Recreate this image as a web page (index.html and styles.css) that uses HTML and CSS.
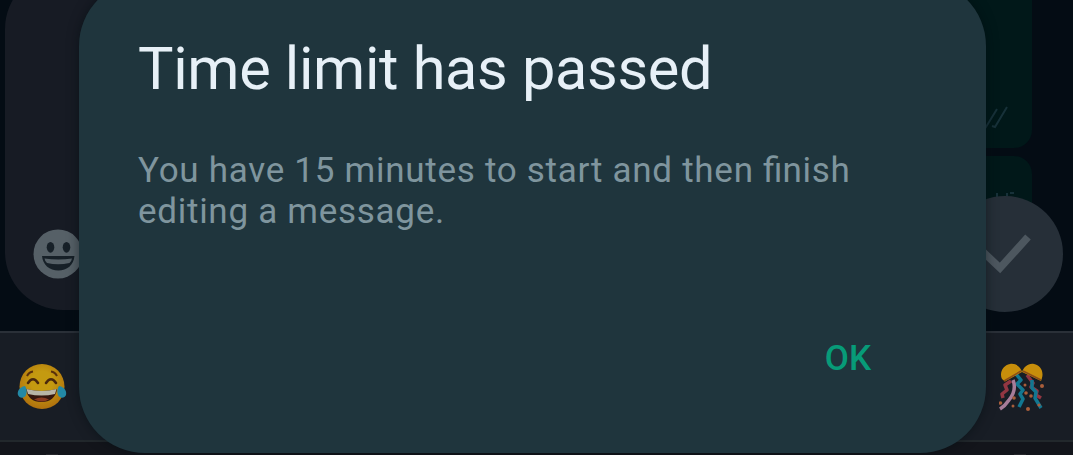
FILE: index.html
```html
<!DOCTYPE html>
<html lang="en">
<head>
    <meta charset="UTF-8">
    <meta name="viewport" content="width=device-width, initial-scale=1.0">
    <title>Edit message</title>
    <link rel="stylesheet" href="styles.css">
</head>
<body>
    <!-- Dimmed conversation behind the dialog -->
    <div class="screen">
        <div class="chat">
            <div class="messages">
                <div class="bubble">
                    <svg class="ticks" width="28" height="26" viewBox="0 0 28 26">
                        <path d="M1 20l3 3L15 5M10 22l3 1L25 3"/>
                    </svg>
                </div>
                <div class="bubble bubble-next">
                    <svg width="28" height="8" viewBox="0 0 28 8">
                        <path d="M8 2v5M18 2v5M21 2h4"/>
                    </svg>
                </div>
            </div>
            <div class="composer">
                <div class="input">
                    <svg width="50" height="50" viewBox="0 0 50 50">
                        <circle cx="25" cy="25" r="24.5" fill="#566067"/>
                        <ellipse cx="17.500" cy="18.3" rx="3.8" ry="5.4" fill="#172028"/>
                        <ellipse cx="33.500" cy="18.3" rx="3.8" ry="5.4" fill="#172028"/>
                        <path d="M9 27h32.500c-.8 9-7.500 14.500-16.200 14.500S9.800 36 9 27z" fill="#172028"/>
                        <path d="M11.500 29.500q14 2 27.500 0-.5 3-2.500 4.500-11.500 2.500-22.500 0-2-1.500-2.500-4.500z" fill="#566067"/>
                    </svg>
                </div>
                <div class="send">
                    <svg width="58" height="46" viewBox="0 0 58 46">
                        <path d="M5 19l19 18L52 6" fill="none" stroke="#4d575f" stroke-width="7.500"/>
                    </svg>
                </div>
            </div>
        </div>

        <div class="emoji-bar">
            <!-- Tears of joy -->
            <svg width="50" height="48" viewBox="0 0 50 48">
                <defs>
                    <radialGradient id="face" cx=".5" cy=".4" r=".6">
                        <stop offset=".4" stop-color="#c49a10"/>
                        <stop offset="1" stop-color="#af700e"/>
                    </radialGradient>
                </defs>
                <circle cx="25" cy="23.500" r="22.500" fill="url(#face)"/>
                <path d="M10 13q2-4 6-4.500M34 8.500q4 .5 6 4.500" fill="none" stroke="#59300c" stroke-width="2"/>
                <path d="M11 20q5-7.500 10 0M29 20q5-7.500 10 0" fill="none" stroke="#49280d" stroke-width="2.600" stroke-linecap="round"/>
                <path d="M9 26q16 4 31 0c-1 8.500-7 13-15.500 13S10 34.500 9 26z" fill="#35170e"/>
                <path d="M9.500 26q15.500 4 30 0l-1.500 5q-13.500 3-27 0z" fill="#b8b5a6"/>
                <path d="M17 36.500q7.500-4 15 0-7 4-15 0z" fill="#8a3b22"/>
                <path d="M8 23c-6 1-8 6-7 9s6 4 8 0c1-3 1-6-1-9zM42 23c6 1 8 6 7 9s-6 4-8 0c-1-3-1-6 1-9z" fill="#2389a5"/>
            </svg>
            <!-- Confetti -->
            <svg width="46" height="50" viewBox="0 0 46 50">
                <g fill="none" stroke-width="3.500" stroke-linejoin="round">
                    <path d="M12 19l-6 4 2 5-5 4 1 4M28 13l6 8-2 4 6 4-1 4 5 3" stroke="#923642"/>
                    <path d="M17 12l5 6-4 4 6 6-3 4 3 5-4 8M33 18v8l4 4-1 6 6 10" stroke="#127791"/>
                    <path d="M14 18q4 10-4 20-4 6-9 9" stroke="#a77c98"/>
                </g>
                <path d="M3 17C0 11 4 3 11 2s11 4 12 8L6 19.500zM43 16c2-7-2-13-8-14s-10 3-12 8l19 9z" fill="#c78e0b"/>
                <path d="M5 19L22 9M24 9l18 9" fill="none" stroke="#8c4d17" stroke-width="1.500"/>
                <g fill="#a95e3b">
                    <circle cx="1.500" cy="41" r="1.800"/>
                    <circle cx="15" cy="36" r="1.800"/>
                    <circle cx="14" cy="44" r="1.500"/>
                    <circle cx="26" cy="23" r="1.500"/>
                    <circle cx="27" cy="31" r="1.800"/>
                    <circle cx="32" cy="34" r="1.800"/>
                    <circle cx="29" cy="47" r="2"/>
                    <circle cx="43" cy="24" r="2"/>
                    <circle cx="40" cy="43" r="1.600"/>
                </g>
            </svg>
        </div>
        <div class="keyboard">
            <span class="key-top"></span>
            <span class="key-top"></span>
        </div>
    </div>

    <div class="dialog" role="dialog">
        <h1>Time limit has passed</h1>
        <p>You have 15 minutes to start and then <span class="ligature">fi</span>nish editing a message.</p>
        <button class="ok">OK</button>
    </div>
</body>
</html>
```
FILE: styles.css
```css
* {
    box-sizing: border-box;
}

body {
    margin: 0;
    height: 455px;
    overflow: hidden;
    position: relative;
    font-family: Roboto, sans-serif;
    background: #040c14;
}

svg {
    display: block;
    flex-shrink: 0;
}

.screen {
    height: 455px;
    display: flex;
    flex-direction: column;
}

/* messages and composer share one grid cell */
.chat {
    height: 331px;
    display: grid;
    flex-shrink: 0;
    overflow: hidden;
}

.messages,
.composer {
    grid-area: 1 / 1;
    min-height: 0;
}

.messages {
    display: flex;
    flex-direction: column;
    align-items: flex-end;
    gap: 8px;
    padding-right: 41px;
}

.bubble {
    width: 400px;
    height: 148px;
    flex-shrink: 0;
    display: flex;
    justify-content: flex-end;
    align-items: flex-end;
    padding: 0 22px 18px 0;
    border-radius: 0 0 18px 18px;
    background: #011819;
}

.bubble-next {
    height: 120px;
    align-items: flex-start;
    padding: 35px 15px 0 0;
    border-radius: 18px;
}

.bubble path {
    fill: none;
    stroke: #173139;
    stroke-width: 2;
}

.composer {
    display: flex;
    align-items: flex-end;
    justify-content: space-between;
    padding: 0 10px 19px 5px;
}

.input {
    width: 930px;
    height: 339px;
    display: flex;
    align-items: flex-end;
    margin-bottom: 2px;
    padding: 0 0 31px 28px;
    border-radius: 58px;
    background: #171b24;
}

.send {
    width: 116px;
    height: 116px;
    display: flex;
    align-items: center;
    justify-content: center;
    border-radius: 50%;
    background: #262f38;
}

.emoji-bar {
    height: 111px;
    flex-shrink: 0;
    display: flex;
    align-items: center;
    justify-content: space-between;
    padding: 0 28px 0 17px;
    border-top: 2px solid #2a3038;
    border-bottom: 2px solid #22282c;
    background: #181d25;
}

.keyboard {
    flex: 1;
    display: flex;
    justify-content: space-between;
    align-items: flex-end;
    padding: 0 47px 0 46px;
    background: #13151b;
}

.key-top {
    width: 12px;
    height: 1px;
    background: #25262b;
}

.dialog {
    position: absolute;
    top: -20px;
    left: 79px;
    width: 907px;
    height: 473px;
    display: flex;
    flex-direction: column;
    padding: 54px 60px 69px 59px;
    border-radius: 66px;
    background: #1f353d;
    box-shadow: 0 0 12px rgba(0, 12, 16, 0.5);
}

.dialog h1 {
    margin: 0;
    font-size: 59.5px;
    font-weight: 400;
    line-height: 70px;
    letter-spacing: -0.33px;
    color: #e7f0f7;
    white-space: nowrap;
}

.dialog p {
    margin: 46px 0 0;
    font-size: 35px;
    line-height: 41px;
    letter-spacing: 0.72px;
    color: #7f959e;
}

.dialog .ligature {
    letter-spacing: 0;
}

.ok {
    align-self: flex-end;
    margin: auto 55px 0 0;
    padding: 0;
    border: 0;
    background: none;
    font: 500 35px/50px Roboto, sans-serif;
    color: #079b78;
}
```
